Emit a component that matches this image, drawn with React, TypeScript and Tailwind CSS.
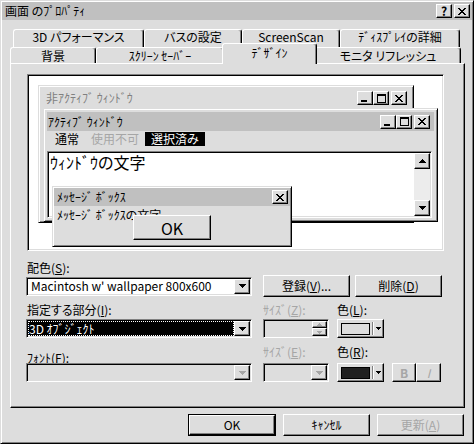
import React from "react";

const RAISED =
  "border border-t-white border-l-white border-r-black border-b-black shadow-[inset_-1px_-1px_0_#808080]";
const SUNKEN =
  "border border-t-[#808080] border-l-[#808080] border-r-white border-b-white shadow-[inset_1px_1px_0_#000000,inset_-1px_-1px_0_#dddddd] p-[1px]";
const WIN =
  "border border-t-[#dddddd] border-l-[#dddddd] border-r-black border-b-black shadow-[inset_1px_1px_0_#ffffff,inset_-1px_-1px_0_#808080]";

const CLOSE = ["xx....xx", ".xx..xx.", "..xxxx..", "...xx...", "..xxxx..", ".xx..xx.", "xx....xx"];
const MAX = ["xxxxxxxxx", "xxxxxxxxx", "x.......x", "x.......x", "x.......x", "x.......x", "x.......x", "x.......x", "xxxxxxxxx"];
const MIN = ["xxxxxx", "xxxxxx"];
const DOWN = ["xxxxxxx", ".xxxxx.", "..xxx..", "...x..."];
const UP = ["...x...", "..xxx..", ".xxxxx.", "xxxxxxx"];
const SDOWN = ["xxxxx", ".xxx.", "..x.."];
const SUP = ["..x..", ".xxx.", "xxxxx"];

function Pix({ rows, color = "#000000" }: { rows: string[]; color?: string }) {
  return (
    <svg width={rows[0].length} height={rows.length} shapeRendering="crispEdges" className="block">
      {rows.flatMap((r, y) =>
        r.split("").map((c, x) =>
          c === "x" ? <rect key={`${x}-${y}`} x={x} y={y} width={1} height={1} fill={color} /> : null
        )
      )}
    </svg>
  );
}

function CapBtn({ children, className = "" }: { children: React.ReactNode; className?: string }) {
  return (
    <div className={`w-[16px] h-[14px] bg-[#dddddd] ${RAISED} flex items-center justify-center ${className}`}>
      {children}
    </div>
  );
}

function CapButtons() {
  return (
    <div className="flex items-center">
      <CapBtn className="items-end justify-start pl-[3px] pb-[2px]">
        <Pix rows={MIN} />
      </CapBtn>
      <CapBtn>
        <Pix rows={MAX} />
      </CapBtn>
      <CapBtn className="ml-[2px]">
        <Pix rows={CLOSE} />
      </CapBtn>
    </div>
  );
}

function U({ children }: { children: React.ReactNode }) {
  return <span className="underline underline-offset-[1px]">{children}</span>;
}

function Tab({
  children,
  className,
  selected = false,
}: {
  children: React.ReactNode;
  className: string;
  selected?: boolean;
}) {
  return (
    <div
      className={`${className} shrink-0 bg-[#dddddd] border-t border-l border-r border-t-white border-l-white border-r-black rounded-t-[3px] shadow-[inset_-1px_0_0_#808080] flex items-center justify-center whitespace-nowrap leading-[12px] ${
        selected ? "relative z-20 pb-[2px]" : ""
      }`}
    >
      {children}
    </div>
  );
}

function Combo({
  children,
  disabled = false,
  className,
}: {
  children?: React.ReactNode;
  disabled?: boolean;
  className: string;
}) {
  return (
    <div className={`${className} h-[19px] ${SUNKEN} flex shrink-0 ${disabled ? "bg-[#dddddd]" : "bg-white"}`}>
      <div className="flex-1 min-w-0 flex items-center">{children}</div>
      <div className={`w-[16px] h-full bg-[#dddddd] ${RAISED} flex items-center justify-center`}>
        <Pix rows={DOWN} color={disabled ? "#a6a6a6" : "#000000"} />
      </div>
    </div>
  );
}

function ColorBtn({ swatch }: { swatch: string }) {
  return (
    <div className={`w-[47px] h-[19px] bg-[#dddddd] ${RAISED} flex items-center pl-[3px] shrink-0`}>
      <div className={`w-[29px] h-[12px] border border-black ${swatch}`} />
      <div className="ml-[2px] w-[2px] h-[13px] border-l border-l-[#808080] border-r border-r-white" />
      <div className="ml-[2px]">
        <Pix rows={SDOWN} />
      </div>
    </div>
  );
}

function Btn({
  children,
  className,
  disabled = false,
}: {
  children: React.ReactNode;
  className: string;
  disabled?: boolean;
}) {
  return (
    <div
      className={`${className} bg-[#dddddd] ${RAISED} flex items-center justify-center shrink-0 ${
        disabled ? "text-[#a6a6a6]" : "text-black"
      }`}
    >
      {children}
    </div>
  );
}

export default function App() {
  return (
    <div className="w-[474px] h-[444px] bg-[#dddddd] border border-t-[#dddddd] border-l-[#dddddd] border-r-black border-b-black shadow-[inset_1px_1px_0_#ffffff,inset_-1px_-1px_0_#808080] p-[1px] font-['Noto_Sans_CJK_JP','Noto_Sans',sans-serif] [font-feature-settings:'palt'] text-[12px] leading-[14px] text-black overflow-hidden">
      {/* Title bar */}
      <div className="h-[18px] bg-[#c0c0c0] flex items-center justify-between pl-[3px] pr-[2px]">
        <span>画面 のﾌﾟﾛﾊﾟﾃｨ</span>
        <div className="flex gap-[2px]">
          <CapBtn>
            <span className="font-bold text-[12px] leading-[12px]">?</span>
          </CapBtn>
          <CapBtn>
            <Pix rows={CLOSE} />
          </CapBtn>
        </div>
      </div>

      {/* Tabs row 1 */}
      <div className="mt-[9px] h-[18px] flex pl-[11px]">
        <Tab className="w-[131px] h-[18px] pb-[3px]">3D パフォーマンス</Tab>
        <Tab className="w-[98px] h-[18px] pb-[3px]">バスの設定</Tab>
        <Tab className="w-[98px] h-[18px] pb-[3px]">ScreenScan</Tab>
        <Tab className="w-[120px] h-[18px] pb-[3px]">ﾃﾞｨｽﾌﾟﾚｲの詳細</Tab>
      </div>
      {/* Tabs row 2 */}
      <div className="relative z-10 h-[16px] flex items-end pl-[8px]">
        <Tab className="w-[86px] h-[16px]">背景</Tab>
        <Tab className="w-[128px] h-[16px]">ｽｸﾘｰﾝ ｾｰﾊﾞｰ</Tab>
        <Tab selected className="w-[95px] h-[21px] -mx-[2px] -mb-[1px]">
          ﾃﾞｻﾞｲﾝ
        </Tab>
        <Tab className="w-[146px] h-[16px]">モニタ リフレッシュ</Tab>
      </div>

      {/* Panel */}
      <div className="ml-[8px] w-[455px] h-[345px] border border-t-white border-l-white border-r-black border-b-black shadow-[inset_-1px_-1px_0_#808080] flex flex-col">
        {/* Preview */}
        <div className={`ml-[16px] mt-[10px] w-[417px] h-[177px] ${SUNKEN}`}>
          <div className="relative w-full h-full bg-white overflow-hidden">
            {/* Inactive window */}
            <div className={`absolute left-[9px] top-[9px] w-[376px] h-[138px] bg-[#dddddd] ${WIN} p-[3px]`}>
              <div className="h-[18px] flex items-center justify-between pl-[4px] pr-[3px]">
                <span className="text-[#808080]">非ｱｸﾃｨﾌﾞ ｳｨﾝﾄﾞｳ</span>
                <CapButtons />
              </div>
            </div>

            {/* Active window */}
            <div className={`absolute left-[14px] top-[32px] w-[395px] h-[114px] bg-[#dddddd] ${WIN} p-[3px] flex flex-col`}>
              <div className="h-[19px] bg-[#c0c0c0] flex items-center justify-between pl-[1px] pr-[4px] shrink-0">
                <span>ｱｸﾃｨﾌﾞ ｳｨﾝﾄﾞｳ</span>
                <CapButtons />
              </div>
              <div className="h-[16px] flex items-center pl-[2px] shrink-0">
                <span className="px-[6px] h-[14px]">通常</span>
                <span className="px-[6px] h-[14px] text-[#a6a6a6]">使用不可</span>
                <span className="px-[6px] h-[14px] bg-black text-white">選択済み</span>
              </div>
              <div className={`mt-[4px] w-[385px] h-[67px] bg-white ${SUNKEN} flex shrink-0`}>
                <div className="flex-1 text-[16px] leading-[19px] pl-[1px]">ｳｨﾝﾄﾞｳの文字</div>
                <div className="w-[16px] h-full flex flex-col bg-[#ececec]">
                  <div className={`w-[16px] h-[16px] bg-[#dddddd] ${RAISED} flex items-center justify-center`}>
                    <Pix rows={UP} />
                  </div>
                  <div className="flex-1" />
                  <div className={`w-[16px] h-[16px] bg-[#dddddd] ${RAISED} flex items-center justify-center`}>
                    <Pix rows={DOWN} />
                  </div>
                </div>
              </div>
            </div>

            {/* Message box */}
            <div className={`absolute left-[23px] top-[110px] w-[240px] h-[61px] bg-[#dddddd] ${WIN} p-[1px] flex flex-col`}>
              <div className="h-[18px] bg-[#c0c0c0] flex items-center justify-between pl-[3px] pr-[2px] shrink-0">
                <span>ﾒｯｾｰｼﾞ ﾎﾞｯｸｽ</span>
                <CapBtn>
                  <Pix rows={CLOSE} />
                </CapBtn>
              </div>
              <div className="relative flex-1">
                <div className="pl-[3px] pt-[2px]">ﾒｯｾｰｼﾞ ﾎﾞｯｸｽの文字</div>
                <div
                  className={`absolute left-[79px] top-[9px] w-[78px] h-[25px] bg-[#dddddd] ${RAISED} flex items-center justify-center text-[16px] leading-[18px]`}
                >
                  OK
                </div>
              </div>
            </div>
          </div>
        </div>

        {/* Row A label */}
        <div className="mt-[10px] h-[14px] pl-[16px] flex">
          <span>
            配色(<U>S</U>):
          </span>
        </div>
        {/* Row A controls */}
        <div className="h-[22px] flex items-center pl-[15px]">
          <Combo className="w-[226px]">
            <span className="pl-[3px] whitespace-nowrap">Macintosh w' wallpaper 800x600</span>
          </Combo>
          <Btn className="ml-[11px] w-[87px] h-[22px]">
            登録(<U>V</U>)...
          </Btn>
          <Btn className="ml-[5px] w-[87px] h-[22px]">
            削除(<U>D</U>)
          </Btn>
        </div>

        {/* Row B labels */}
        <div className="mt-[6px] h-[14px] pl-[16px] flex">
          <span className="w-[236px]">
            指定する部分(<U>I</U>):
          </span>
          <span className="w-[74px] text-[#a6a6a6]">
            ｻｲｽﾞ(<U>Z</U>):
          </span>
          <span>
            色(<U>L</U>):
          </span>
        </div>
        {/* Row B controls */}
        <div className="mt-[2px] h-[19px] flex items-center pl-[15px]">
          <Combo className="w-[226px]">
            <div className="h-full flex-1 bg-black text-white outline-1 outline-dotted outline-white -outline-offset-1 pl-[1px] flex items-center whitespace-nowrap">
              3D ｵﾌﾞｼﾞｪｸﾄ
            </div>
          </Combo>
          <div className={`ml-[11px] w-[66px] h-[19px] bg-[#dddddd] ${SUNKEN} flex justify-end shrink-0`}>
            <div className="w-[15px] h-full flex flex-col">
              <div className={`h-[7px] bg-[#dddddd] ${RAISED} flex items-center justify-center`}>
                <Pix rows={SUP} color="#a6a6a6" />
              </div>
              <div className={`h-[8px] bg-[#dddddd] ${RAISED} flex items-center justify-center`}>
                <Pix rows={SDOWN} color="#a6a6a6" />
              </div>
            </div>
          </div>
          <div className="ml-[8px]">
            <ColorBtn swatch="bg-[#dddddd]" />
          </div>
        </div>

        {/* Row C labels */}
        <div className="mt-[7px] h-[14px] pl-[16px] flex">
          <span className="w-[236px] pt-[6px]">
            ﾌｫﾝﾄ(<U>F</U>):
          </span>
          <span className="w-[74px] text-[#a6a6a6]">
            ｻｲｽﾞ(<U>E</U>):
          </span>
          <span>
            色(<U>R</U>):
          </span>
        </div>
        {/* Row C controls */}
        <div className="mt-[4px] h-[19px] flex items-center pl-[15px]">
          <Combo className="w-[226px]" disabled />
          <Combo className="ml-[11px] w-[66px]" disabled />
          <div className="ml-[8px]">
            <ColorBtn swatch="bg-[#202020]" />
          </div>
          <Btn className="ml-[8px] w-[24px] h-[19px] font-bold" disabled>
            B
          </Btn>
          <Btn className="w-[25px] h-[19px] italic" disabled>
            I
          </Btn>
        </div>
      </div>

      {/* Bottom buttons */}
      <div className="mt-[6px] flex justify-end gap-[7px] pr-[8px]">
        <div className="w-[88px] h-[22px] border border-black">
          <Btn className="w-full h-full">OK</Btn>
        </div>
        <Btn className="w-[87px] h-[22px]">ｷｬﾝｾﾙ</Btn>
        <Btn className="w-[87px] h-[22px]" disabled>
          更新(<U>A</U>)
        </Btn>
      </div>
    </div>
  );
}
